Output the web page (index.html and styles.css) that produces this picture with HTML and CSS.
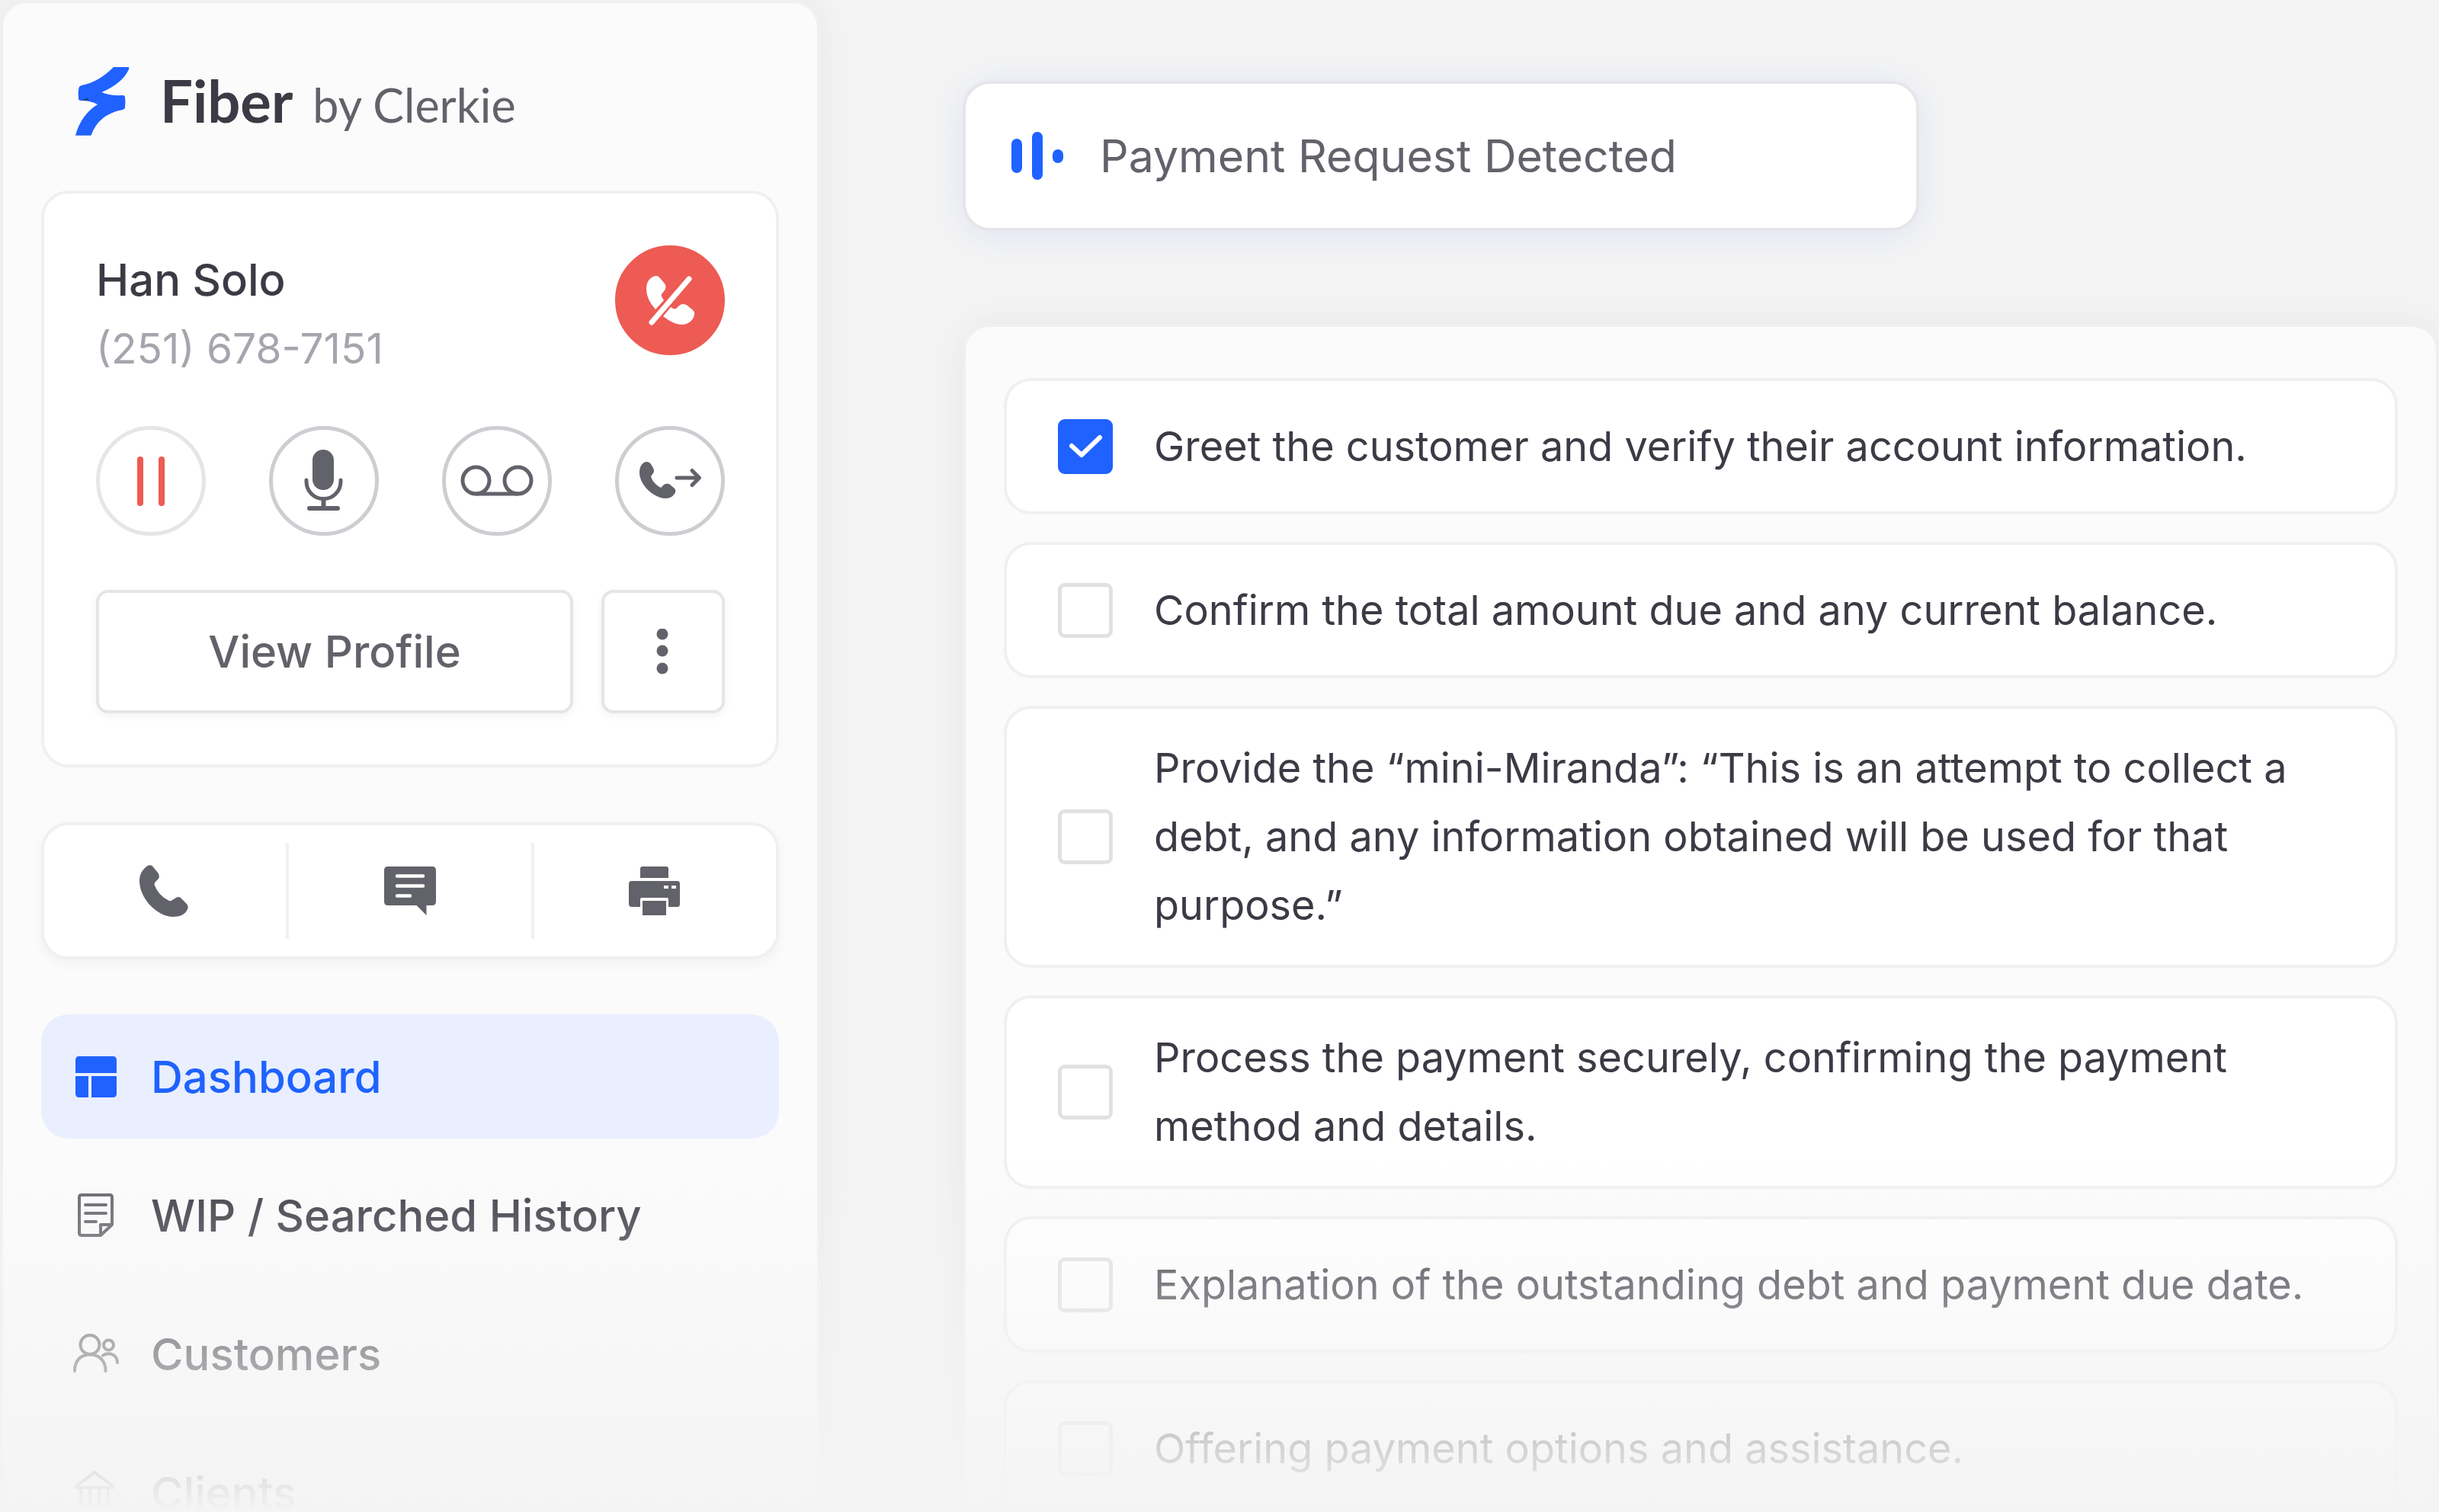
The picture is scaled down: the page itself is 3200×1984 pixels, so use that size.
FILE: index.html
```html
<!DOCTYPE html>
<html lang="en">
<head>
  <meta charset="UTF-8">
  <title>Fiber by Clerkie</title>
  <meta name="viewport" content="width=device-width, initial-scale=1.0">
  <link rel="stylesheet" href="styles.css">
</head>

<body>

  <div class="app">

    <aside class="sidebar">
      <a class="brand" href="#">
        <svg class="brand-mark" viewBox="0 0 72 90" aria-hidden="true">
          <path fill="#1f62ff" d="M50 0H69Q71 0 70 3Q62 21 34.500 33Q44 38 62 37Q65 37 65 40Q66 46 65 53Q65 55 62 56Q30 62 20.500 89.700H0Q7 63 29 49Q20 44 7 44Q4 44 4 41Q3 34 4.500 27Q5 25 8 24Q30 20 50 0Z"/>
          <path fill="none" stroke="#2b2d42" stroke-width="1.500" d="M11 43.500L17 41.500"/>
        </svg>
        <span class="brand-name">Fiber</span>
        <span class="brand-by">by Clerkie</span>
      </a>

      <section class="call-card">
        <div class="caller">
          <div>
            <h2 class="caller-name">Han Solo</h2>
            <p class="caller-phone">(251) 678-7151</p>
          </div>
          <button class="round hangup" aria-label="Hang up">
            <svg viewBox="22 22 100 100">
              <path fill="#fff" d="M41 57C41 45 49 40 54 40Q57 40 59 43L65 50Q68 54 65 59L61 64Q60 66 62 69L64 72L53 84Q41 71 41 57Z"/>
              <path fill="#fff" d="M63 93L73 81Q77 84 80 83L84 79Q89 75 95 79L101 84Q105 87 104 91C103 98 96 104 87 104Q77 104 63 93Z"/>
              <path stroke="#fff" stroke-width="7" stroke-linecap="round" d="M97 44L48 101"/>
            </svg>
          </button>
        </div>

        <div class="controls">
          <button class="round hold" aria-label="Hold">
            <svg viewBox="22 22 100 100">
              <path stroke="#ed5b54" stroke-width="8" stroke-linecap="round" d="M58 44V101M86 44V101"/>
            </svg>
          </button>
          <button class="round" aria-label="Mute">
            <svg viewBox="22 22 100 100">
              <rect x="57" y="31" width="28" height="53" rx="14" fill="currentColor"/>
              <g fill="none" stroke="currentColor" stroke-linecap="round">
                <path stroke-width="5" d="M49 71V73A22.500 22.500 0 0 0 94 73V71"/>
                <path stroke-width="6" d="M71.500 96V107M53 108H90"/>
              </g>
            </svg>
          </button>
          <button class="round" aria-label="Voicemail">
            <svg viewBox="22 22 100 100">
              <g fill="none" stroke="currentColor" stroke-width="5">
                <circle cx="44.500" cy="71.500" r="17.500"/>
                <circle cx="99.500" cy="71.500" r="17.500"/>
                <path d="M44 89H100"/>
              </g>
            </svg>
          </button>
          <button class="round" aria-label="Transfer call">
            <svg viewBox="22 22 100 100">
              <path fill="currentColor" d="M32 61C32 52 37 47 41 47Q45 47 47 50L50 55Q52 59 50 62L47 66Q49 75 60 81L64 77Q67 75 71 76L77 81Q80 83 79 87C77 92 72 95 66 95C52 95 32 78 32 61Z"/>
              <path fill="none" stroke="currentColor" stroke-width="5" stroke-linecap="round" stroke-linejoin="round" d="M81 68H110M101 58.500L110.500 68L101 77.500"/>
            </svg>
          </button>
        </div>

        <div class="actions">
          <button class="btn btn-wide">View Profile</button>
          <button class="btn btn-more" aria-label="More options">
            <svg viewBox="0 0 60 60" fill="currentColor">
              <circle cx="29" cy="7" r="7.500"/>
              <circle cx="29" cy="29" r="7.500"/>
              <circle cx="29" cy="52" r="7.500"/>
            </svg>
          </button>
        </div>
      </section>

      <div class="channels">
        <button class="channel" aria-label="Call">
          <svg viewBox="0 0 68 68" fill="currentColor">
            <path d="M0 21C0 12 4 6 10 1.500Q14 -1 17 1.500L24 10Q27 14 25 18L21 22Q19 24 20 27Q25 40 38 46.500Q41 48 43 46L48 43Q51 41 54 43L61 50Q65 54 63 58C61 63 56 68 43 68C22 67 0 43 0 21Z"/>
          </svg>
        </button>
        <button class="channel" aria-label="Message">
          <svg viewBox="0 0 68 68" fill="currentColor">
            <path d="M5 2H63Q68 2 68 7V48Q68 53 63 53H55.500V66L42.500 53H5Q0 53 0 48V7Q0 2 5 2Z"/>
            <path stroke="#fff" stroke-width="4.500" stroke-linecap="round" d="M17 14.500H51M17 27.500H51M17 40.500H34"/>
          </svg>
        </button>
        <button class="channel" aria-label="Print">
          <svg viewBox="0 0 68 68" fill="currentColor">
            <path d="M18 2H49Q52 2 52 5V17H15V5Q15 2 18 2Z"/>
            <path d="M4 21H64Q67 21 67 25V51Q67 55 64 55H52V45Q52 43 50 43H17Q15 43 15 45V55H4Q0 55 0 51V25Q0 21 4 21Z"/>
            <path d="M18 47H49V66H18Z"/>
            <path fill="#fff" d="M46 27H52V31H46ZM56 27H62V31H56Z"/>
          </svg>
        </button>
      </div>

      <nav class="nav">
        <a class="nav-item active" href="#">
          <svg viewBox="0 0 60 60" fill="currentColor">
            <path d="M8 3H52Q57 3 57 8V25H3V8Q3 3 8 3ZM3 29H20V57H8Q3 57 3 52ZM24 29H57V52Q57 57 52 57H24Z"/>
          </svg>
          Dashboard
        </a>
        <a class="nav-item" href="#">
          <svg viewBox="0 0 60 60" class="line-icon">
            <path d="M11 3H48Q51 3 51 6V42L36 56H11Q8 56 8 53V6Q8 3 11 3ZM36 55V42H50M16 16H43M16 27H43M16 38H30"/>
          </svg>
          WIP / Searched History
        </a>
        <a class="nav-item" href="#">
          <svg viewBox="0 0 60 60" class="line-icon">
            <circle cx="22" cy="17.500" r="12.500"/>
            <circle cx="46.500" cy="18" r="6.500"/>
            <path d="M2 52C2 38 10 30.500 22 30.500S42.500 38 42.500 52M39 31.500C49 26 58 32 58 41"/>
          </svg>
          Customers
        </a>
        <a class="nav-item" href="#">
          <svg viewBox="0 0 60 60" class="line-icon">
            <path d="M28 3L4 21V23H52V21ZM10 24V46M22 24V46M34 24V46M46 24V46M4 46H52M1 53H55"/>
          </svg>
          Clients
        </a>
      </nav>
    </aside>

    <main class="main">
      <div class="alert" role="status">
        <svg class="alert-icon" viewBox="0 0 72 72" stroke="#1f62ff" stroke-width="14" stroke-linecap="round" aria-hidden="true">
          <path d="M9 20V51M36 11V60M63 34V38"/>
        </svg>
        Payment Request Detected
      </div>

      <div class="checklist">
        <label class="task">
          <input type="checkbox" checked>
          <span>Greet the customer and verify their account information.</span>
        </label>
        <label class="task">
          <input type="checkbox">
          <span>Confirm the total amount due and any current balance.</span>
        </label>
        <label class="task">
          <input type="checkbox">
          <span>Provide the “mini-Miranda”: “This is an attempt to collect a debt, and any information obtained will be used for that purpose.”</span>
        </label>
        <label class="task">
          <input type="checkbox">
          <span>Process the payment securely, confirming the payment method and details.</span>
        </label>
        <label class="task">
          <input type="checkbox">
          <span>Explanation of the outstanding debt and payment due date.</span>
        </label>
        <label class="task">
          <input type="checkbox">
          <span>Offering payment options and assistance.</span>
        </label>
      </div>
    </main>

    <div class="fade"></div>
  </div>

</body>
</html>
```
FILE: styles.css
```css
:root {
  --page: #f4f4f4;
  --panel: #fbfbfb;
  --line: #eff0f2;
  --ink: #3b3b45;
  --muted: #62626a;
  --soft: #a5a5ad;
  --blue: #1f62ff;
  --red: #ed5b54;
}

* {
  box-sizing: border-box;
}

body {
  margin: 0;
  font-family: Inter, 'Liberation Sans', sans-serif;
  background-color: var(--page);
  color: var(--ink);
  overflow: hidden;
}

h2,
p {
  margin: 0;
}

a {
  color: inherit;
  text-decoration: none;
}

button {
  font: inherit;
  color: var(--muted);
  background: #fff;
  padding: 0;
  cursor: pointer;
}

.app {
  position: relative;
  height: 100vh;
  display: grid;
  grid-template-columns: 1076px 1fr;
  gap: 187px;
  overflow: hidden;
}

/* Sidebar */
.sidebar {
  min-height: 120vh;
  padding: 84px 50px;
  background: var(--panel);
  border: 4px solid var(--line);
  border-radius: 36px;
  box-shadow: 0 0 48px rgba(60, 80, 110, 0.08);
}

.brand {
  display: flex;
  align-items: baseline;
  height: 90px;
  margin: 0 0 72px 45px;
}

.brand-mark {
  width: 72px;
  height: 90px;
  margin-right: 39px;
  align-self: center;
}

.brand-name {
  font-family: Lato, Inter, sans-serif;
  font-size: 76px;
  line-height: 88px;
  font-weight: 700;
}

.brand-by {
  margin-left: 26px;
  font-family: Lato, Inter, sans-serif;
  font-size: 61px;
  color: var(--muted);
}

.call-card,
.channels {
  background: #fff;
  border: 4px solid var(--line);
  border-radius: 36px;
}

.call-card {
  padding: 68px 67px 67px 68px;
}

.caller {
  display: flex;
  justify-content: space-between;
  align-items: flex-start;
  margin-bottom: 57px;
}

.caller-name {
  font-size: 58px;
  line-height: 90px;
  font-weight: 500;
}

.caller-phone {
  font-size: 55px;
  line-height: 90px;
  color: var(--soft);
}

.controls {
  display: flex;
  justify-content: space-between;
  margin-bottom: 71px;
}

.round {
  display: flex;
  align-items: center;
  justify-content: center;
  width: 144px;
  height: 144px;
  border: 5px solid #cdcdd2;
  border-radius: 50%;
}

.round svg {
  width: 100px;
  height: 100px;
}

.hold {
  border-color: #e6e6e8;
}

.hangup {
  background: var(--red);
  border-color: var(--red);
}

.actions {
  display: flex;
  gap: 37px;
}

.btn {
  height: 162px;
  border: 4px solid #e5e5e8;
  border-radius: 16px;
  font-size: 58px;
  font-weight: 500;
  box-shadow: 0 4px 12px rgba(20, 20, 40, 0.05);
}

.btn-wide {
  flex: 1;
}

.btn-more {
  width: 162px;
}

.btn-more svg {
  display: block;
  width: 60px;
  height: 60px;
  margin: 0 auto;
}

.channels {
  display: flex;
  align-items: center;
  height: 180px;
  margin: 72px 0;
  box-shadow: 0 6px 16px rgba(20, 20, 40, 0.04);
}

.channel {
  flex: 1;
  display: flex;
  align-items: center;
  justify-content: center;
  height: 126px;
  border: 0;
}

.channel + .channel {
  border-left: 4px solid var(--line);
}

.channel svg {
  width: 68px;
  height: 68px;
}

.nav {
  display: flex;
  flex-direction: column;
  gap: 19px;
}

.nav-item {
  display: flex;
  align-items: center;
  gap: 42px;
  height: 163px;
  padding: 0 42px;
  border-radius: 36px;
  font-size: 58px;
  font-weight: 500;
}

.nav-item svg {
  width: 60px;
  height: 60px;
}

.nav-item.active {
  color: var(--blue);
  background: #e9efff;
}

.line-icon {
  fill: none;
  stroke: var(--muted);
  stroke-width: 4;
  stroke-linecap: round;
  stroke-linejoin: round;
}

/* Main column */
.main {
  padding-top: 106px;
}

.alert {
  display: flex;
  align-items: center;
  gap: 46px;
  max-width: 1255px;
  height: 197px;
  padding-left: 58px;
  background: #fff;
  border: 4px solid #e6e5e9;
  border-radius: 36px;
  box-shadow: 0 6px 48px rgba(50, 90, 255, 0.1);
  font-size: 59px;
  color: var(--muted);
}

.alert-icon {
  width: 72px;
  height: 72px;
}

.checklist {
  display: flex;
  flex-direction: column;
  gap: 36px;
  min-height: 100vh;
  margin-top: 122px;
  padding: 67px 50px;
  background: var(--panel);
  border: 4px solid var(--line);
  border-radius: 36px;
  box-shadow: 0 0 48px rgba(60, 80, 110, 0.08);
}

.task {
  display: flex;
  align-items: center;
  gap: 54px;
  min-height: 179px;
  padding: 33px 67px;
  background: #fff;
  border: 4px solid var(--line);
  border-radius: 36px;
  font-size: 54px;
  line-height: 90px;
}

.task input {
  appearance: none;
  flex: none;
  width: 72px;
  height: 72px;
  margin: 0;
  border: 5px solid #e1e1e4;
  border-radius: 9px;
  background: #fff;
}

.task input:checked {
  border-color: var(--blue);
  background: var(--blue) url("data:image/svg+xml,%3Csvg xmlns='http://www.w3.org/2000/svg' viewBox='5 5 62 62'%3E%3Cpath fill='none' stroke='%23fff' stroke-width='6' stroke-linecap='round' stroke-linejoin='round' d='M18 35L31 47L55 24'/%3E%3C/svg%3E") center / 62px no-repeat;
}

/* Fades both columns out towards the bottom of the window */
.fade {
  position: absolute;
  left: 0;
  right: 0;
  bottom: 0;
  height: 464px;
  background: linear-gradient(rgba(244, 244, 244, 0), var(--page));
  pointer-events: none;
}
```
